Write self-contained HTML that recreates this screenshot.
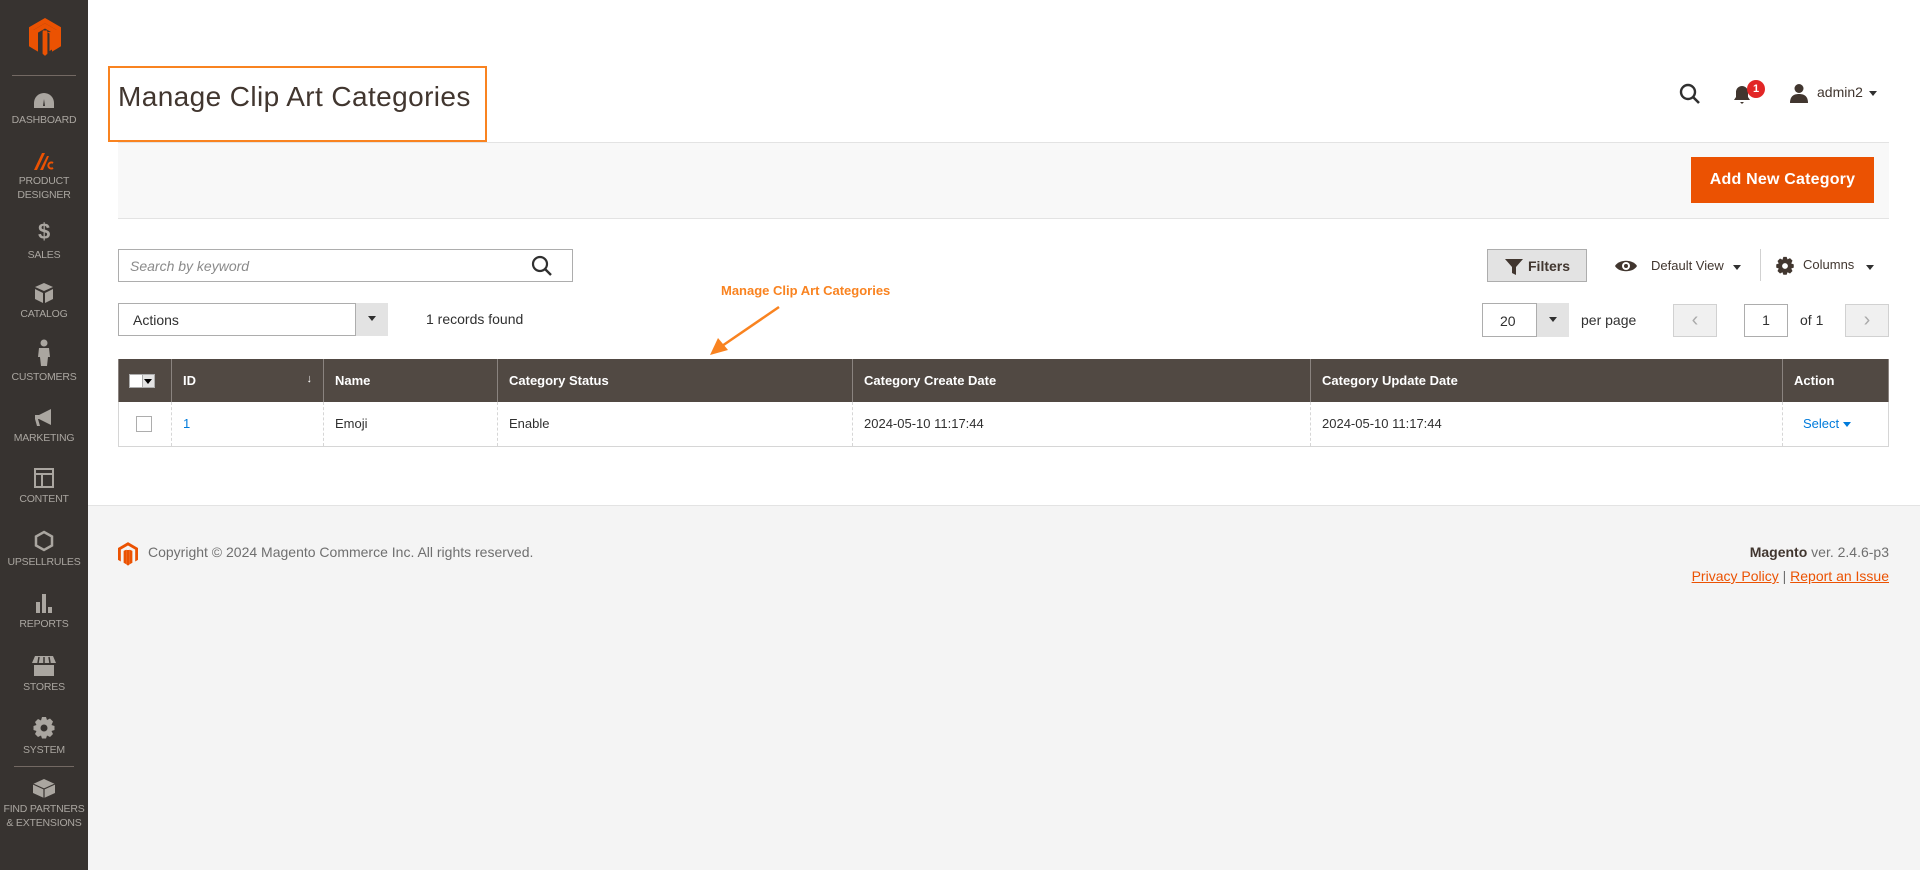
<!DOCTYPE html>
<html><head><meta charset="utf-8"><style>
*{box-sizing:border-box;margin:0;padding:0}
body{width:1920px;height:870px;overflow:hidden;background:#f4f4f4;font-family:"Liberation Sans",sans-serif;color:#303030;position:relative;font-size:14px}
.abs{position:absolute}
#side{left:0;top:0;width:88px;height:870px;background:#373330}
.nav{position:absolute;left:0;width:88px;text-align:center;color:#aaa6a0;font-size:10.5px;line-height:14px;letter-spacing:-.2px}
.nav svg{display:block;margin:0 auto 3px}
#main{left:88px;top:0;width:1832px;height:506px;background:#fff;border-bottom:1px solid #e3e3e3}
.btn{position:absolute;border:1px solid #adadad;background:#e3e3e3}
.sel{position:absolute;border:1px solid #adadad;background:#fff}
.caret{display:inline-block;width:0;height:0;border-left:4px solid transparent;border-right:4px solid transparent;border-top:5px solid #303030}
table{position:absolute;left:118px;top:359px;width:1771px;border-collapse:collapse;font-size:13px}
th{background:#514943;color:#fff;text-align:left;font-weight:bold;height:43px;padding:0 11px;border-left:1px solid #8a837f;border-right:1px solid #8a837f}
td{height:44px;padding:0 11px;border-left:1px dashed #d6d6d6;border-bottom:1px solid #d6d6d6}
td:first-child{border-left:1px solid #d6d6d6}td:last-child{border-right:1px solid #d6d6d6}
</style></head><body>
<div id="side" class="abs">
<svg class="abs" style="left:29px;top:18px" width="32" height="38" viewBox="0 0 32 38"><path d="M16 0L0 9.3v19L4.5 31V12L16 5.3 27.5 12v19l4.5-2.7v-19z M13.7 14.3v21L16 38l2.3-2.7v-21L16 13 20.5 15.5V33l2.6-1.5V14z" fill="#eb5202"/><path d="M16 5.3L4.5 12v19l4.5 2.6V14.6L16 10.5l7 4.1v19l4.5-2.6V12z" fill="#eb5202"/><path d="M13.7 12.5h4.6V36l-2.3 1.5-2.3-1.5z" fill="#eb5202"/></svg>
<div class="abs" style="left:12px;top:75px;width:64px;height:1px;background:#736963"></div>
<div class="nav" style="top:92px"><svg width="22" height="18" viewBox="0 0 22 18"><path d="M11 1A10 10 0 0 0 1 11v5h20v-5A10 10 0 0 0 11 1zm1 13h-2l1-7z" fill="#aaa6a0"/></svg>DASHBOARD</div>
<div class="nav" style="top:151px;color:#aaa6a0"><svg width="24" height="20" viewBox="0 0 24 20"><path d="M2 19L10 2h3L5 19z" fill="#eb5202"/><path d="M8 19L15 5h2L11 19z" fill="#eb5202"/><path d="M21 12a3 3 0 1 0 0 5" stroke="#eb5202" stroke-width="2" fill="none"/></svg>PRODUCT<br>DESIGNER</div>
<div class="nav" style="top:220px"><div style="font-size:22px;font-weight:bold;line-height:24px;margin-bottom:4px">$</div>SALES</div>
<div class="nav" style="top:282px"><svg width="20" height="22" viewBox="0 0 20 22"><path d="M10 1l9 4-9 4-9-4zM1 7l8 4v10l-8-4zm18 0v10l-8 4V11z" fill="#aaa6a0"/></svg>CATALOG</div>
<div class="nav" style="top:339px"><svg width="14" height="28" viewBox="0 0 14 28"><circle cx="7" cy="4" r="3.5" fill="#aaa6a0"/><path d="M2 9h10l1 9h-2l-1 9H4l-1-9H1z" fill="#aaa6a0"/></svg>CUSTOMERS</div>
<div class="nav" style="top:408px"><svg width="22" height="20" viewBox="0 0 22 20"><path d="M2 7h4l12-6v16L6 11H5l2 7H4l-2-7z" fill="#aaa6a0"/></svg>MARKETING</div>
<div class="nav" style="top:467px"><svg width="22" height="22" viewBox="0 0 22 22"><path d="M1 1h20v20H1zM3 3v3h16V3zm0 5v11h5V8zm7 0v11h9V8z" fill="#aaa6a0"/></svg>CONTENT</div>
<div class="nav" style="top:530px"><svg width="20" height="22" viewBox="0 0 20 22"><path d="M10 2l8 4.5v9L10 20l-8-4.5v-9z" stroke="#aaa6a0" stroke-width="2.5" fill="none"/></svg>UPSELLRULES</div>
<div class="nav" style="top:592px"><svg width="22" height="22" viewBox="0 0 22 22"><path d="M3 10h4v11H3zm6-8h4v19H9zm6 13h4v6h-4z" fill="#aaa6a0"/></svg>REPORTS</div>
<div class="nav" style="top:655px"><svg width="26" height="22" viewBox="0 0 26 22"><path d="M4 1h18l3 7H1zM3 10h20v11H3z" fill="#aaa6a0"/><path d="M8 2l-1 6M13 2v6M18 2l1 6" stroke="#373330" stroke-width="1.5"/></svg>STORES</div>
<div class="nav" style="top:716px"><svg width="24" height="24" viewBox="0 0 24 24"><path d="M10 1h4l1 3 3-1.5 3 3L19.5 9l3 1v4l-3 1 1.5 3-3 3-3-1.5-1 3h-4l-1-3-3 1.5-3-3L4.5 15l-3-1v-4l3-1L3 6l3-3 3 1.5z" fill="#aaa6a0"/><circle cx="12" cy="12" r="3.5" fill="#373330"/></svg>SYSTEM</div>
<div class="abs" style="left:14px;top:766px;width:60px;height:1px;background:#736963"></div>
<div class="nav" style="top:777px"><svg width="24" height="22" viewBox="0 0 24 22"><path d="M12 2l11 5v9l-11 5-11-5V7z" fill="#aaa6a0"/><path d="M1 7l11 5 11-5M12 12v9" stroke="#373330" stroke-width="1.2" fill="none"/></svg>FIND PARTNERS<br>&amp; EXTENSIONS</div>
</div>

<div id="main" class="abs"></div>
<div class="abs" style="left:108px;top:66px;width:379px;height:76px;border:2px solid #f98320"></div>
<div class="abs" style="left:118px;top:80px;font-size:28px;line-height:34px;color:#41362f;letter-spacing:.4px">Manage Clip Art Categories</div>

<svg class="abs" style="left:1679px;top:83px" width="22" height="22" viewBox="0 0 22 22"><circle cx="9" cy="9" r="7" stroke="#303030" stroke-width="2.4" fill="none"/><path d="M14 14l6 6" stroke="#303030" stroke-width="2.6"/></svg>
<svg class="abs" style="left:1733px;top:85px" width="18" height="20" viewBox="0 0 18 20"><path d="M9 1a6 6 0 0 0-6 6v5l-2 3h16l-2-3V7a6 6 0 0 0-6-6zM7 17h4l-2 2z" fill="#41362f"/></svg>
<div class="abs" style="left:1747px;top:80px;width:18px;height:18px;border-radius:50%;background:#e22626;color:#fff;font-size:11px;font-weight:bold;text-align:center;line-height:18px">1</div>
<svg class="abs" style="left:1789px;top:83px" width="20" height="20" viewBox="0 0 20 20"><circle cx="10" cy="5.5" r="4.5" fill="#41362f"/><path d="M1 20c0-7 4-9 9-9s9 2 9 9z" fill="#41362f"/></svg>
<div class="abs" style="left:1817px;top:84px;font-size:14px;color:#41362f">admin2</div>
<span class="abs caret" style="left:1869px;top:91px"></span>

<div class="abs" style="left:118px;top:142px;width:1771px;height:77px;background:#f8f8f8;border-top:1px solid #e3e3e3;border-bottom:1px solid #e3e3e3"></div>
<div class="abs" style="left:1691px;top:157px;width:183px;height:46px;background:#eb5202;color:#fff;font-size:16px;font-weight:bold;text-align:center;line-height:46px;letter-spacing:.2px">Add New Category</div>

<div class="sel" style="left:118px;top:249px;width:455px;height:33px"><span class="abs" style="left:11px;top:8px;font-style:italic;color:#8a8a8a;font-size:14px">Search by keyword</span>
<svg class="abs" style="left:412px;top:5px" width="22" height="22" viewBox="0 0 22 22"><circle cx="9" cy="9" r="7" stroke="#303030" stroke-width="2.2" fill="none"/><path d="M14 14l6 6" stroke="#303030" stroke-width="2.4"/></svg></div>

<div class="btn" style="left:1487px;top:249px;width:100px;height:33px"><svg class="abs" style="left:17px;top:9px" width="18" height="16" viewBox="0 0 18 16"><path d="M0 0h18l-7 8v8l-4-2V8z" fill="#41362f"/></svg><span class="abs" style="left:40px;top:8px;font-size:14px;font-weight:bold;color:#41362f">Filters</span></div>
<svg class="abs" style="left:1614px;top:258px" width="24" height="16" viewBox="0 0 24 16"><path d="M1 8C5 1 19 1 23 8 19 15 5 15 1 8z" fill="#41362f"/><circle cx="12" cy="8" r="4" fill="#fff"/><circle cx="12" cy="8" r="2" fill="#41362f"/></svg>
<div class="abs" style="left:1651px;top:258px;font-size:13px;color:#41362f">Default View</div>
<span class="abs caret" style="left:1733px;top:265px"></span>
<div class="abs" style="left:1760px;top:249px;width:1px;height:32px;background:#d1d1d1"></div>
<svg class="abs" style="left:1775px;top:256px" width="20" height="20" viewBox="0 0 24 24"><path d="M10 1h4l1 3 3-1.5 3 3L19.5 9l3 1v4l-3 1 1.5 3-3 3-3-1.5-1 3h-4l-1-3-3 1.5-3-3L4.5 15l-3-1v-4l3-1L3 6l3-3 3 1.5z" fill="#41362f"/><circle cx="12" cy="12" r="3.5" fill="#fff"/></svg>
<div class="abs" style="left:1803px;top:257px;font-size:13px;color:#41362f">Columns</div>
<span class="abs caret" style="left:1866px;top:265px"></span>

<div class="sel" style="left:118px;top:303px;width:270px;height:33px"><span class="abs" style="left:14px;top:8px;font-size:14px">Actions</span><div class="abs" style="left:236px;top:-1px;width:33px;height:33px;background:#e3e3e3;border-left:1px solid #adadad"><span class="abs caret" style="left:12px;top:13px"></span></div></div>
<div class="abs" style="left:426px;top:311px;font-size:14px">1 records found</div>

<div class="sel" style="left:1482px;top:303px;width:87px;height:34px"><span class="abs" style="left:17px;top:9px">20</span><div class="abs" style="left:53px;top:-1px;width:33px;height:34px;background:#e3e3e3;border-left:1px solid #adadad"><span class="abs caret" style="left:12px;top:14px"></span></div></div>
<div class="abs" style="left:1581px;top:312px">per page</div>
<div class="abs" style="left:1673px;top:304px;width:44px;height:33px;background:#f0f0f0;border:1px solid #d1d1d1;color:#aaa;text-align:center;line-height:30px;font-size:20px">‹</div>
<div class="sel" style="left:1744px;top:304px;width:44px;height:33px;text-align:center;line-height:31px">1</div>
<div class="abs" style="left:1800px;top:312px">of 1</div>
<div class="abs" style="left:1845px;top:304px;width:44px;height:33px;background:#f0f0f0;border:1px solid #d1d1d1;color:#aaa;text-align:center;line-height:30px;font-size:20px">›</div>

<div class="abs" style="left:721px;top:283px;font-size:13px;font-weight:bold;color:#f98320">Manage Clip Art Categories</div>
<svg class="abs" style="left:700px;top:300px" width="90" height="62" viewBox="0 0 90 62"><path d="M79 7L22 46" stroke="#f98320" stroke-width="2.5"/><path d="M10 55l8-17 10 12z" fill="#f98320"/></svg>

<table>
<tr><th style="width:53px;padding:0 10px"><span style="display:inline-block;width:26px;height:14px;background:#fff;border:1px solid #adadad;position:relative;vertical-align:middle"><span style="position:absolute;right:0;top:0;width:12px;height:12px;background:#e3e3e3;border-left:1px solid #adadad"></span><span class="caret" style="position:absolute;right:2px;top:4px;border-top-color:#000"></span></span></th>
<th style="width:152px">ID<span style="float:right;font-weight:normal;font-size:11px">↓</span></th><th style="width:174px">Name</th><th style="width:355px">Category Status</th><th style="width:458px">Category Create Date</th><th style="width:472px">Category Update Date</th><th>Action</th></tr>
<tr><td style="padding-left:17px"><span style="display:inline-block;width:16px;height:16px;border:1px solid #adadad;background:#fff;vertical-align:middle"></span></td><td style="color:#007bdb">1</td><td>Emoji</td><td>Enable</td><td>2024-05-10 11:17:44</td><td>2024-05-10 11:17:44</td><td style="color:#007bdb;padding-left:20px">Select <span class="caret" style="border-top-color:#007bdb;vertical-align:middle"></span></td></tr>
</table>

<svg class="abs" style="left:118px;top:542px" width="20" height="24" viewBox="0 0 32 38"><path d="M16 0L0 9.3v19L4.5 31V12L16 5.3 27.5 12v19l4.5-2.7v-19z" fill="#eb5202"/><path d="M13.7 12.5h4.6V36l-2.3 1.5-2.3-1.5z" fill="#eb5202"/><path d="M9 14v19l4.5 2.6V12zM23 14v19l-4.5 2.6V12z" fill="#eb5202"/></svg>
<div class="abs" style="left:148px;top:544px;font-size:14px;color:#6f6f6f">Copyright © 2024 Magento Commerce Inc. All rights reserved.</div>
<div class="abs" style="right:31px;top:544px;font-size:14px;color:#6f6f6f"><b style="color:#41362f">Magento</b> ver. 2.4.6-p3</div>
<div class="abs" style="right:31px;top:568px;font-size:14px;color:#6f6f6f"><span style="color:#eb5202;text-decoration:underline">Privacy Policy</span> | <span style="color:#eb5202;text-decoration:underline">Report an Issue</span></div>
</body></html>
